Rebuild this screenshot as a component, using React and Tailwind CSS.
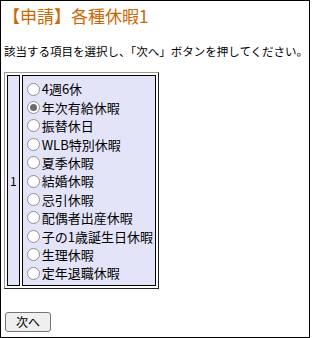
const items = [
  "4週6休",
  "年次有給休暇",
  "振替休日",
  "WLB特別休暇",
  "夏季休暇",
  "結婚休暇",
  "忌引休暇",
  "配偶者出産休暇",
  "子の1歳誕生日休暇",
  "生理休暇",
  "定年退職休暇",
];

const font = { fontFamily: '"Noto Sans CJK JP", "Liberation Sans", sans-serif' };

function Radio({ checked }) {
  return (
    <span className="inline-flex items-center justify-center w-[13px] h-[13px] rounded-full border border-[#8f8f8f] bg-white mr-[2px] shrink-0">
      {checked && <span className="w-[7px] h-[7px] rounded-full bg-[#6b6b6b]"></span>}
    </span>
  );
}

export default function App() {
  return (
    <div
      className="w-[310px] h-[338px] border border-black bg-white text-black flex flex-col items-start pl-[3px] overflow-hidden"
      style={font}
    >
      <h1 className="text-[17px] leading-[20px] text-[#cc6600] mt-[5px] -ml-[1px] font-normal">
        【申請】各種休暇1
      </h1>
      <p className="text-[11.5px] leading-[14px] mt-[18px] whitespace-nowrap">
        該当する項目を選択し、「次へ」ボタンを押してください。
      </p>
      <div className="mt-[14px] flex gap-[2px] p-[2px] border border-solid border-t-[#9a9a9a] border-l-[#9a9a9a] border-r-[#222] border-b-[#222]">
        <div className="flex items-center border border-black bg-[#e4e4f8] text-[12px] px-[2px]">1</div>
        <div className="border border-black bg-[#e4e4f8] pl-[4px] pr-[2px] pt-[4px] pb-[3px]">
          {items.map((item, i) => (
            <label key={item} className="flex items-center h-[18.4px] text-[13px] whitespace-nowrap">
              <Radio checked={i === 1} />
              {item}
            </label>
          ))}
        </div>
      </div>
      <button className="mt-[23px] ml-[1px] h-[20px] px-[10px] text-[12px] leading-[16px] border border-[#767676] rounded-[3px] bg-[#efefef]">
        次へ
      </button>
    </div>
  );
}
